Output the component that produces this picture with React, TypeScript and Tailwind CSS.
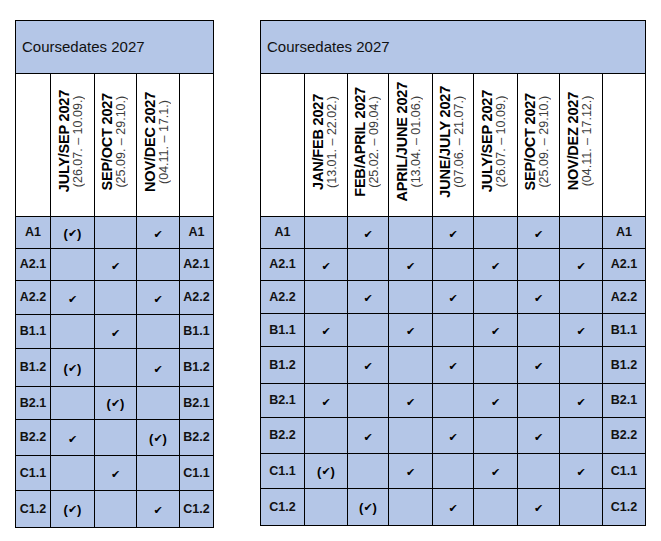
import React from "react";

type Mark = "" | "v" | "p";

const Check = () => (
  <span className="inline-block text-[11px] leading-none" style={{ fontFamily: '"DejaVu Sans", sans-serif' }}>
    ✔
  </span>
);

const Cell = ({ m }: { m: Mark }) => {
  if (m === "v") return <Check />;
  if (m === "p")
    return (
      <span className="inline-flex items-center font-bold text-[13px] leading-none">
        (<Check />)
      </span>
    );
  return null;
};

type Col = { title: string; dates: string; w: string };

const Header = ({ c }: { c: Col }) => (
  <div className="flex h-full items-center justify-center pb-[7px] pr-[3px]">
    <div className="rotate-180 [writing-mode:vertical-rl] text-center">
      <div className="text-[14.5px] font-bold leading-[15px] text-black tracking-[-0.2px]">{c.title}</div>
      <div className="text-[12.5px] leading-[13px] text-[#3c3c3c]">{c.dates}</div>
    </div>
  </div>
);

const Table = ({
  cols,
  rows,
  heights,
  firstW,
  lastW,
}: {
  cols: Col[];
  rows: { label: string; marks: Mark[] }[];
  heights: string[];
  firstW: string;
  lastW: string;
}) => (
  <table className="table-fixed border-collapse border border-black">
    <colgroup>
      <col className={firstW} />
      {cols.map((c, i) => (
        <col key={i} className={c.w} />
      ))}
      <col className={lastW} />
    </colgroup>
    <tbody>
      <tr className="h-[53px] bg-[#b4c6e7]">
        <td colSpan={cols.length + 2} className="border border-black pl-[6px] text-[15px] text-[#111] align-middle">
          Coursedates 2027
        </td>
      </tr>
      <tr className="h-[143px] bg-white">
        <td className="border border-black"></td>
        {cols.map((c, i) => (
          <td key={i} className="border border-black p-0 h-[143px]">
            <Header c={c} />
          </td>
        ))}
        <td className="border border-black"></td>
      </tr>
      {rows.map((r, ri) => (
        <tr key={ri} className={`${heights[ri]} bg-[#b4c6e7]`}>
          <td className="border border-black text-center text-[12.5px] font-bold text-[#111]">{r.label}</td>
          {r.marks.map((m, mi) => (
            <td key={mi} className="border border-black text-center align-middle">
              <Cell m={m} />
            </td>
          ))}
          <td className="border border-black text-center text-[12.5px] font-bold text-[#111]">{r.label}</td>
        </tr>
      ))}
    </tbody>
  </table>
);

const leftCols: Col[] = [
  { title: "JULY/SEP 2027", dates: "(26.07. – 10.09.)", w: "w-[44px]" },
  { title: "SEP/OCT 2027", dates: "(25.09. – 29.10.)", w: "w-[42px]" },
  { title: "NOV/DEC 2027", dates: "(04.11. – 17.1.)", w: "w-[43px]" },
];

const leftRows: { label: string; marks: Mark[] }[] = [
  { label: "A1", marks: ["p", "", "v"] },
  { label: "A2.1", marks: ["", "v", ""] },
  { label: "A2.2", marks: ["v", "", "v"] },
  { label: "B1.1", marks: ["", "v", ""] },
  { label: "B1.2", marks: ["p", "", "v"] },
  { label: "B2.1", marks: ["", "p", ""] },
  { label: "B2.2", marks: ["v", "", "p"] },
  { label: "C1.1", marks: ["", "v", ""] },
  { label: "C1.2", marks: ["p", "", "v"] },
];

const leftHeights = ["h-[32px]", "h-[32px]", "h-[34px]", "h-[34px]", "h-[38px]", "h-[33px]", "h-[36px]", "h-[35px]", "h-[37px]"];

const rightCols: Col[] = [
  { title: "JAN/FEB 2027", dates: "(13.01. – 22.02.)", w: "w-[43px]" },
  { title: "FEB/APRIL 2027", dates: "(25.02. – 09.04.)", w: "w-[41px]" },
  { title: "APRIL/JUNE 2027", dates: "(13.04. – 01.06.)", w: "w-[44px]" },
  { title: "JUNE/JULY 2027", dates: "(07.06. – 21.07.)", w: "w-[41px]" },
  { title: "JULY/SEP 2027", dates: "(26.07. – 10.09.)", w: "w-[44px]" },
  { title: "SEP/OCT 2027", dates: "(25.09. – 29.10.)", w: "w-[42px]" },
  { title: "NOV/DEZ 2027", dates: "(04.11. – 17.12.)", w: "w-[43px]" },
];

const A: Mark[] = ["", "v", "", "v", "", "v", ""];
const B: Mark[] = ["v", "", "v", "", "v", "", "v"];

const rightRows: { label: string; marks: Mark[] }[] = [
  { label: "A1", marks: A },
  { label: "A2.1", marks: B },
  { label: "A2.2", marks: A },
  { label: "B1.1", marks: B },
  { label: "B1.2", marks: A },
  { label: "B2.1", marks: B },
  { label: "B2.2", marks: A },
  { label: "C1.1", marks: ["p", "", "v", "", "v", "", "v"] },
  { label: "C1.2", marks: ["", "p", "", "v", "", "v", ""] },
];

const rightHeights = ["h-[32px]", "h-[32px]", "h-[33px]", "h-[33px]", "h-[37px]", "h-[34px]", "h-[36px]", "h-[35px]", "h-[37px]"];

export default function App() {
  return (
    <div
      className="w-[661px] h-[541px] bg-white flex items-start gap-[46px] pt-[20px] pl-[15px] text-black"
      style={{ fontFamily: '"Liberation Sans", Arial, sans-serif' }}
    >
      <Table cols={leftCols} rows={leftRows} heights={leftHeights} firstW="w-[35px]" lastW="w-[34px]" />
      <Table cols={rightCols} rows={rightRows} heights={rightHeights} firstW="w-[44px]" lastW="w-[43px]" />
    </div>
  );
}
